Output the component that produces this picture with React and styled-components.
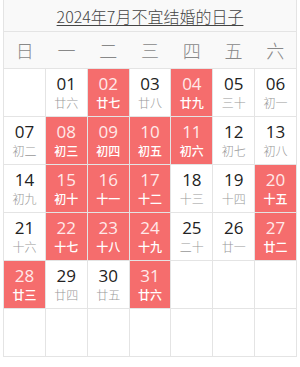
import React from "react";
import styled, { createGlobalStyle } from "styled-components";

const GlobalStyle = createGlobalStyle`
  body {
    margin: 0;
    background: #fff;
    font-family: "Noto Sans CJK SC", "Noto Sans", sans-serif;
  }
`;

const Wrapper = styled.div`
  width: 294px;
  margin: 0 3px;
`;

const TitleRow = styled.div`
  height: 32px;
  display: flex;
  align-items: center;
  justify-content: center;
  background: #f9f9f9;
  border-left: 1px solid #e4e4e4;
  border-right: 1px solid #e4e4e4;
  border-bottom: 1px solid #e4e4e4;
  box-sizing: border-box;
`;

const Title = styled.a`
  font-size: 16px;
  font-weight: 300;
  color: #444;
  text-decoration: underline;
  text-underline-offset: 2px;
`;

const WeekRow = styled.div`
  height: 36px;
  display: grid;
  grid-template-columns: repeat(7, 1fr);
  align-items: center;
  background: #f9f9f9;
  border-left: 1px solid #e4e4e4;
  border-right: 1px solid #e4e4e4;
  box-sizing: border-box;
`;

const WeekDay = styled.div`
  text-align: center;
  font-size: 18px;
  font-weight: 300;
  color: #888;
`;

const Grid = styled.div`
  display: grid;
  grid-template-columns: repeat(7, 1fr);
  grid-auto-rows: 47px;
  gap: 1px;
  padding: 1px;
  background: #e4e4e4;
`;

const Cell = styled.div`
  background: ${(p) => (p.$bad ? "#f56d6d" : "#fff")};
  display: flex;
  flex-direction: column;
  align-items: center;
  justify-content: center;
  gap: 1px;
`;

const Num = styled.span`
  font-family: "Open Sans", "Noto Sans", sans-serif;
  font-size: 17px;
  line-height: 20px;
  color: ${(p) => (p.$bad ? "#ffe9e9" : "#222")};
`;

const Lunar = styled.span`
  font-size: 12px;
  line-height: 16px;
  color: ${(p) => (p.$bad ? "#fff" : "#999")};
  font-weight: ${(p) => (p.$bad ? 500 : 300)};
`;

const weekDays = ["日", "一", "二", "三", "四", "五", "六"];

const lunar = [
  "廿六", "廿七", "廿八", "廿九", "三十", "初一", "初二", "初三", "初四", "初五",
  "初六", "初七", "初八", "初九", "初十", "十一", "十二", "十三", "十四", "十五",
  "十六", "十七", "十八", "十九", "二十", "廿一", "廿二", "廿三", "廿四", "廿五", "廿六",
];

const badDays = [2, 4, 8, 9, 10, 11, 15, 16, 17, 20, 22, 23, 24, 27, 28, 31];

const App = () => {
  const cells = [];
  for (let i = 0; i < 42; i++) {
    const day = i; // July 1st 2024 is a Monday
    if (day >= 1 && day <= 31) {
      const bad = badDays.includes(day);
      cells.push(
        <Cell key={i} $bad={bad}>
          <Num $bad={bad}>{String(day).padStart(2, "0")}</Num>
          <Lunar $bad={bad}>{lunar[day - 1]}</Lunar>
        </Cell>
      );
    } else {
      cells.push(<Cell key={i} />);
    }
  }

  return (
    <Wrapper>
      <GlobalStyle />
      <TitleRow>
        <Title>2024年7月不宜结婚的日子</Title>
      </TitleRow>
      <WeekRow>
        {weekDays.map((d) => (
          <WeekDay key={d}>{d}</WeekDay>
        ))}
      </WeekRow>
      <Grid>{cells}</Grid>
    </Wrapper>
  );
};

export default App;
